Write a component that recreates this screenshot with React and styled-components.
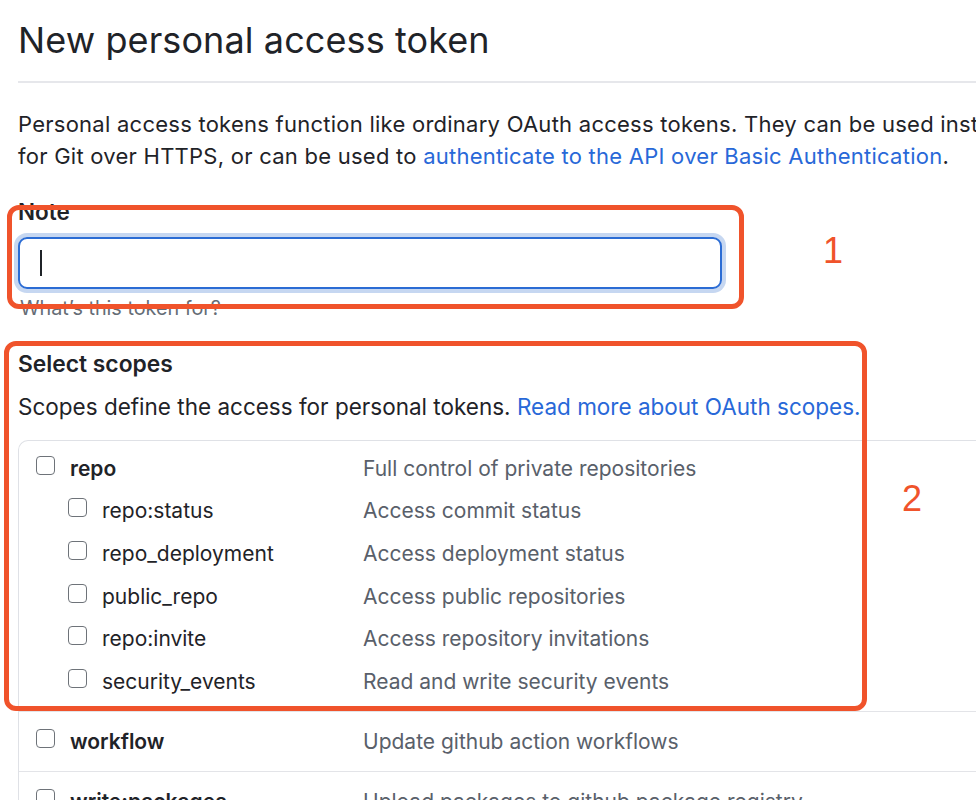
import React from 'react'
import styled, { createGlobalStyle } from 'styled-components'

const GlobalStyle = createGlobalStyle`
    html, body {
        margin: 0;
        padding: 0;
        background: #ffffff;
        overflow: hidden;
    }
    body {
        font-family: Inter, "Noto Sans", "Liberation Sans", sans-serif;
        color: #1f2328;
        -webkit-font-smoothing: antialiased;
    }
`

const Page = styled.div`
    position: relative;
    width: 1120px;
    padding: 18px 0 0 18px;
    box-sizing: border-box;
`
const Title = styled.h1`
    margin: 0;
    padding-bottom: 18px;
    font-size: 36px;
    line-height: 45px;
    font-weight: 400;
    letter-spacing: 0.1px;
    border-bottom: 2px solid #e6e7eb;
`
const Intro = styled.p`
    margin: 25px 0 0;
    font-size: 22px;
    line-height: 32px;
    letter-spacing: 0.25px;
    white-space: nowrap;
`
const Link = styled.a`
    color: #2868d8;
    text-decoration: none;
`
const Label = styled.div`
    margin-top: 24px;
    font-size: 22.5px;
    line-height: 32px;
    font-weight: 600;
`
const Input = styled.div`
    margin-top: 9px;
    width: 704px;
    height: 52px;
    box-sizing: border-box;
    border: 2px solid #2b6cd4;
    border-radius: 9px;
    box-shadow: 0 0 0 4px #c6d7f1;
    display: flex;
    align-items: center;
    padding-left: 20px;
`
const Caret = styled.span`
    display: block;
    width: 2px;
    height: 26px;
    background: #1f2328;
`
const Hint = styled.div`
    margin-top: 6px;
    padding-left: 2px;
    font-size: 19.8px;
    line-height: 27px;
    color: #656d76;
`
const SectionTitle = styled.div`
    margin-top: 26px;
    font-size: 22.8px;
    line-height: 32px;
    font-weight: 600;
`
const SectionText = styled.p`
    margin: 11px 0 0;
    font-size: 22.5px;
    line-height: 32px;
    white-space: nowrap;
`
const Table = styled.div`
    margin-top: 17px;
    border: 1.5px solid #dfe1e6;
    border-right: none;
    border-radius: 10px 0 0 0;
`
const Group = styled.div`
    padding: ${p => p.$single ? '0' : '6px 0 8px'};
    border-top: ${p => p.$first ? 'none' : '1.5px solid #e3e4e8'};
`
const Row = styled.div`
    display: flex;
    align-items: center;
    height: ${p => p.$tall ? '59px' : '42.6px'};
`
const ScopeCell = styled.div`
    width: 344px;
    box-sizing: border-box;
    padding-left: ${p => p.$sub ? '49px' : '17px'};
    display: flex;
    align-items: center;
    gap: 15px;
    font-size: 21px;
    font-weight: ${p => p.$sub ? 400 : 600};
    white-space: nowrap;
`
const Box = styled.span`
    display: block;
    width: 19px;
    height: 19px;
    box-sizing: border-box;
    border: 1.8px solid #6e7379;
    border-radius: 4px;
    margin-top: -6px;
`
const Desc = styled.div`
    font-size: 21px;
    color: #59606a;
    white-space: nowrap;
`
const Mark = styled.div`
    position: absolute;
    left: ${p => p.$x}px;
    top: ${p => p.$y}px;
    width: ${p => p.$w}px;
    height: ${p => p.$h}px;
    box-sizing: border-box;
    border: 5.5px solid #f0532b;
    border-radius: 12px;
    pointer-events: none;
`
const Num = styled.div`
    position: absolute;
    left: ${p => p.$x}px;
    top: ${p => p.$y}px;
    font-family: "Liberation Sans", Arial, sans-serif;
    font-size: 36px;
    line-height: 40px;
    font-weight: 400;
    color: #f0532b;
`

const repoScopes = [
    ['repo:status', 'Access commit status'],
    ['repo_deployment', 'Access deployment status'],
    ['public_repo', 'Access public repositories'],
    ['repo:invite', 'Access repository invitations'],
    ['security_events', 'Read and write security events'],
]

export default function App() {
    return (
        <Page>
            <GlobalStyle />
            <Title>New personal access token</Title>
            <Intro>
                Personal access tokens function like ordinary OAuth access tokens. They can be used instead of a password<br />
                for Git over HTTPS, or can be used to <Link href="#">authenticate to the API over Basic Authentication</Link>.
            </Intro>

            <Label>Note</Label>
            <Input>
                <Caret />
            </Input>
            <Hint>What’s this token for?</Hint>

            <SectionTitle>Select scopes</SectionTitle>
            <SectionText>
                Scopes define the access for personal tokens. <Link href="#">Read more about OAuth scopes.</Link>
            </SectionText>

            <Table>
                <Group $first>
                    <Row>
                        <ScopeCell><Box />repo</ScopeCell>
                        <Desc>Full control of private repositories</Desc>
                    </Row>
                    {repoScopes.map(([name, desc]) => (
                        <Row key={name}>
                            <ScopeCell $sub><Box />{name}</ScopeCell>
                            <Desc>{desc}</Desc>
                        </Row>
                    ))}
                </Group>
                <Group $single>
                    <Row $tall>
                        <ScopeCell><Box />workflow</ScopeCell>
                        <Desc>Update github action workflows</Desc>
                    </Row>
                </Group>
                <Group $single>
                    <Row $tall>
                        <ScopeCell><Box />write:packages</ScopeCell>
                        <Desc>Upload packages to github package registry</Desc>
                    </Row>
                </Group>
            </Table>

            <Mark $x={7} $y={205} $w={737} $h={104} />
            <Num $x={823} $y={231}>1</Num>
            <Mark $x={4} $y={341} $w={863} $h={370} />
            <Num $x={902} $y={479}>2</Num>
        </Page>
    )
}
